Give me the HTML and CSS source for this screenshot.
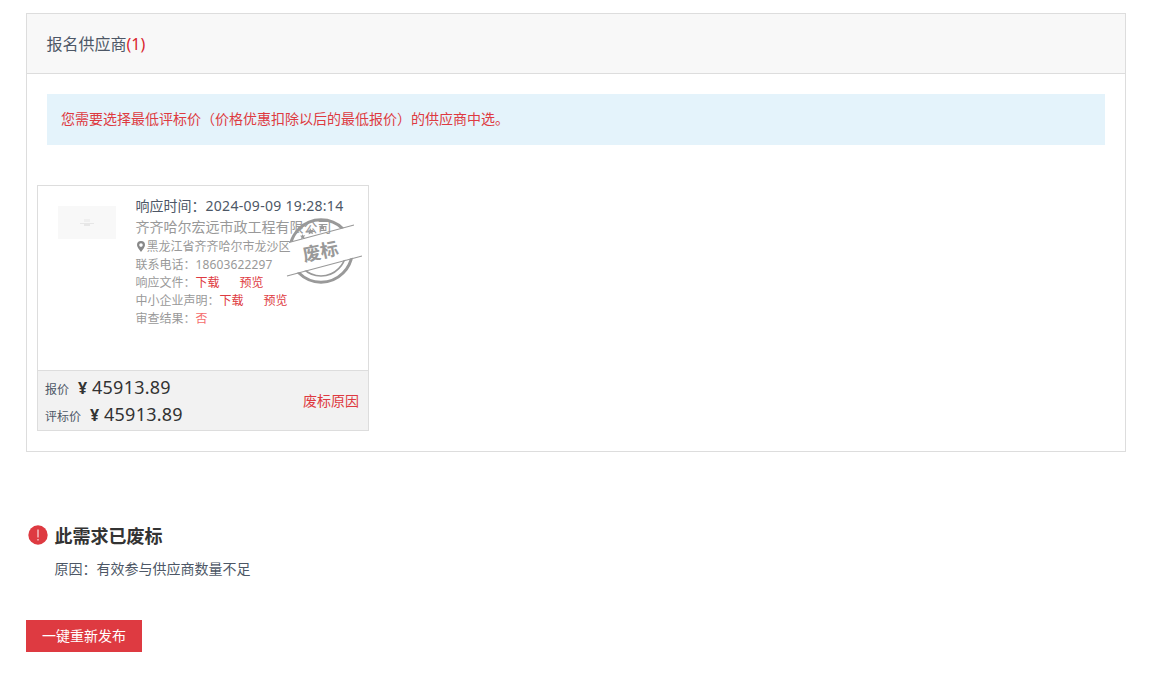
FILE: index.html
```html
<!DOCTYPE html>
<html lang="zh-CN">

<head>
    <meta charset="UTF-8">
    <meta name="viewport" content="width=device-width, initial-scale=1.0">
    <title>报名供应商</title>
    <link rel="stylesheet" href="styles.css">
</head>

<body>
    <div class="panel">
        <div class="panel-header">报名供应商<span class="count">(1)</span></div>
        <div class="notice">您需要选择最低评标价（价格优惠扣除以后的最低报价）的供应商中选。</div>

        <div class="supplier-card">
            <div class="supplier-body">
                <div class="logo">
                    <svg width="16" height="10" viewBox="0 0 16 10">
                        <path d="M5 1h6v3H5z" fill="#efefef" />
                        <path d="M1 5h4v1H1zM11 5h4v1h-4zM5 5h6v3H5z" fill="#e7e7e7" />
                    </svg>
                </div>
                <div class="info">
                    <p class="time">响应时间：<span class="time-value">2024-09-09 19:28:14</span></p>
                    <p class="company">齐齐哈尔宏远市政工程有限公司</p>
                    <p class="address">
                        <svg width="8" height="11" viewBox="0 0 8 11">
                            <path fill="#888" fill-rule="evenodd" d="M4 0a4 4 0 0 1 4 4c0 2-2 4-4 7C2 8 0 6 0 4a4 4 0 0 1 4-4zm0 2.3a1.8 1.8 0 1 0 0 3.6 1.8 1.8 0 0 0 0-3.6z" />
                        </svg>黑龙江省齐齐哈尔市龙沙区
                    </p>
                    <p>联系电话：<span class="phone">18603622297</span></p>
                    <p>响应文件：<a href="#">下载</a><a href="#">预览</a></p>
                    <p>中小企业声明：<a href="#">下载</a><a href="#">预览</a></p>
                    <p>审查结果：<span class="failed">否</span></p>
                </div>
                <svg class="stamp" width="78" height="70" viewBox="0 0 78 70">
                    <defs>
                        <clipPath id="stampTop"><path d="M0 0h78v7L2 27z" /></clipPath>
                        <clipPath id="stampBottom"><path d="M0 60L78 39v31H0z" /></clipPath>
                    </defs>
                    <g fill="none" stroke="#999">
                        <g clip-path="url(#stampTop)">
                            <circle cx="36" cy="35" r="31.2" stroke-width="3" />
                        </g>
                        <g clip-path="url(#stampBottom)">
                            <circle cx="36" cy="35" r="31.2" stroke-width="3" />
                            <circle cx="36" cy="35" r="25" stroke-width="1.6" />
                        </g>
                        <path d="M4 26.5L69 9M2 60L77 40" stroke-width="1.1" />
                    </g>
                    <g fill="#999">
                        <path d="M17 18l1.200 1.600 2-.4-1.200 1.700.8 1.900-2-.5-1.800.8.4-2-1.400-1.400 2-.2z" />
                        <path d="M25 12l1.300 2 2.300-.3-1.300 2 .8 2.300-2.400-.8-2 1.200.2-2.400-1.800-1.400 2.300-.4z" />
                        <path d="M37 8l1.200 2 2.400.1-1.700 1.700.5 2.400-2.200-1.200-2.200 1.100.5-2.400-1.500-1.700 2.200-.2z" />
                    </g>
                    <text x="35.5" y="42" text-anchor="middle" transform="rotate(-12 36 36)">废标</text>
                </svg>
            </div>
            <div class="supplier-footer">
                <div class="prices">
                    <p>报价<span class="yen">¥</span><span class="amount">45913.89</span></p>
                    <p>评标价<span class="yen">¥</span><span class="amount">45913.89</span></p>
                </div>
                <a class="reason-link" href="#">废标原因</a>
            </div>
        </div>
    </div>

    <div class="result">
        <span class="result-icon">
            <svg width="20" height="20" viewBox="0 0 20 20">
                <circle cx="10" cy="10" r="9.7" fill="#de3a41" />
                <path d="M9.500 4.500h1v8h-1zM9.500 14h1v1.500h-1z" fill="#fff" />
            </svg>
        </span>
        <div>
            <h2>此需求已废标</h2>
            <p>原因：有效参与供应商数量不足</p>
        </div>
    </div>

    <button class="republish">一键重新发布</button>
</body>

</html>
```
FILE: styles.css
```css
* {
    box-sizing: border-box;
    margin: 0;
    padding: 0;
}

body {
    padding: 13px 0 0 26px;
    background: #fff;
    color: #4d5766;
    font-family: "Noto Sans", "Noto Sans CJK SC", sans-serif;
    font-size: 14px;
}

a {
    color: #de3a41;
    text-decoration: none;
}

.panel {
    width: 1100px;
    height: 439px;
    border: 1px solid #ddd;
}

.panel-header {
    height: 60px;
    padding-left: 19.5px;
    border-bottom: 1px solid #ddd;
    background: #f8f8f8;
    font-size: 16px;
    line-height: 60px;
}

.count {
    color: #d9262e;
}

.notice {
    height: 51px;
    margin: 20px 20px 40px;
    padding-left: 14px;
    background: #e4f3fb;
    color: #de3a41;
    line-height: 49px;
}

.supplier-card {
    width: 332px;
    height: 246px;
    margin-left: 10px;
    border: 1px solid #ddd;
}

.supplier-body {
    position: relative;
    display: flex;
    height: 184px;
    padding: 9px 0 0 20px;
}

.logo {
    display: flex;
    align-items: center;
    justify-content: center;
    width: 58px;
    height: 33px;
    margin: 11px 19.5px 0 0;
    background: #f8f8f8;
}

.info {
    color: #999;
    font-size: 12px;
    line-height: 18px;
    white-space: nowrap;
}

.info .time {
    color: #4d5766;
    font-size: 14px;
    line-height: 22px;
}

.time-value {
    letter-spacing: 0.3px;
}

.info .company {
    margin-bottom: 1px;
    font-size: 14px;
    line-height: 20px;
}

.address svg {
    margin: 0 2px 0 1px;
    vertical-align: -1px;
}

.phone {
    letter-spacing: 0.13px;
}

.info a {
    margin-right: 20px;
}

.failed {
    color: #f56c6c;
}

.stamp {
    position: absolute;
    top: 30px;
    left: 247px;
}

.stamp text {
    fill: #999;
    font-size: 18px;
    font-weight: bold;
}

.supplier-footer {
    display: flex;
    align-items: center;
    justify-content: space-between;
    height: 60px;
    padding: 0 9px 0 7px;
    border-top: 1px solid #ddd;
    background: #f2f2f2;
}

.reason-link {
    padding-bottom: 2px;
}

.prices p {
    height: 27px;
    font-size: 12px;
    line-height: 27px;
}

.yen {
    display: inline-block;
    width: 14px;
    margin-left: 9px;
    color: #333;
    font-size: 16px;
    font-weight: bold;
}

.amount {
    color: #333;
    font-size: 18px;
    letter-spacing: 0.25px;
}

.result {
    display: flex;
    margin-top: 70px;
}

.result-icon {
    width: 28.5px;
    padding: 3px 0 0 1.5px;
}

.result h2 {
    height: 28px;
    color: #333;
    font-size: 18px;
    line-height: 28px;
}

.result p {
    margin-top: 8px;
    line-height: 22px;
}

.republish {
    display: block;
    width: 116px;
    height: 32px;
    margin-top: 40px;
    border: none;
    background: #de3a41;
    color: #fff;
    font-family: inherit;
    font-size: 14px;
    line-height: 32px;
}
```
